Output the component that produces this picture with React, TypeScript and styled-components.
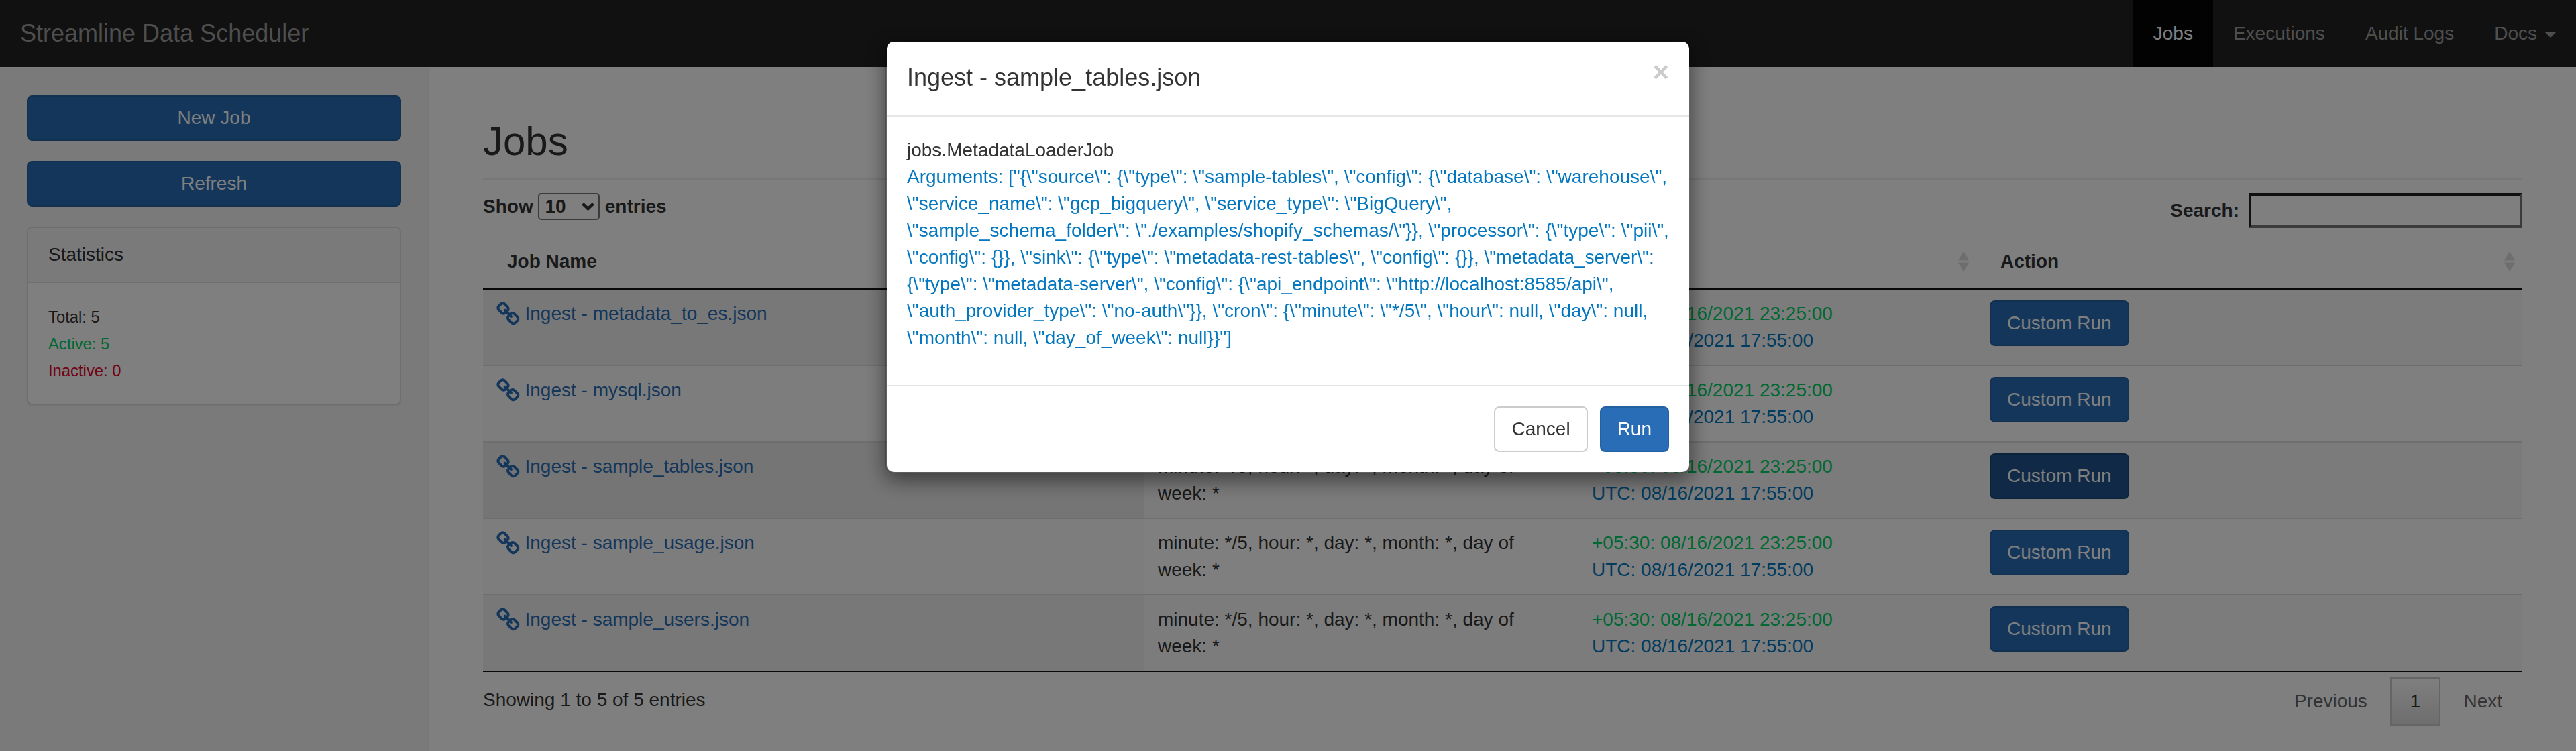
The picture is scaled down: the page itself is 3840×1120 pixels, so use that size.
import React from "react";
import styled, { createGlobalStyle } from "styled-components";

const GlobalStyle = createGlobalStyle`
  *, *::before, *::after { box-sizing: border-box; }
  html, body { margin: 0; padding: 0; }
  body {
    font-family: "Liberation Sans", Arial, sans-serif;
    font-size: 28px;
    line-height: 40px;
    color: #333;
    background: #fff;
    overflow: hidden;
  }
`;

const Page = styled.div`
  display: flex;
  flex-direction: column;
  height: 1120px;
`;

/* ---------- Navbar ---------- */

const Navbar = styled.nav`
  flex: none;
  display: flex;
  justify-content: space-between;
  height: 100px;
  background: #222;
`;

const Brand = styled.a`
  padding: 30px;
  font-size: 36px;
  color: #9d9d9d;
`;

const NavList = styled.ul`
  display: flex;
  margin: 0;
  padding: 0;
  list-style: none;
`;

const NavItem = styled.li<{ $active?: boolean }>`
  display: flex;
  align-items: center;
  padding: 0 30px;
  color: ${(p) => (p.$active ? "#fff" : "#9d9d9d")};
  background: ${(p) => (p.$active ? "#040404" : "transparent")};
`;

const Caret = styled.span`
  margin: 4px 0 0 12px;
  border-top: 8px solid currentColor;
  border-left: 8px solid transparent;
  border-right: 8px solid transparent;
`;

/* ---------- Shared ---------- */

const Button = styled.button<{ $variant?: "primary" | "pressed" | "default"; $block?: boolean }>`
  display: ${(p) => (p.$block ? "block" : "inline-block")};
  width: ${(p) => (p.$block ? "100%" : "auto")};
  height: 68px;
  padding: 0 24px;
  font: inherit;
  line-height: 40px;
  border: 2px solid
    ${(p) => (p.$variant === "default" ? "#ccc" : p.$variant === "pressed" ? "#1a4677" : "#2461a1")};
  border-radius: 8px;
  color: ${(p) => (p.$variant === "default" ? "#333" : "#fff")};
  background: ${(p) =>
    p.$variant === "default" ? "#fff" : p.$variant === "pressed" ? "#1f538c" : "#286db6"};
`;

/* ---------- Sidebar ---------- */

const Columns = styled.div`
  flex: 1;
  display: flex;
`;

const Sidebar = styled.aside`
  flex: none;
  display: flex;
  flex-direction: column;
  gap: 30px;
  width: 640px;
  margin-top: 2px;
  padding: 40px;
  background: #f5f5f5;
  border-right: 2px solid #eee;
`;

const Panel = styled.section`
  border: 2px solid #ddd;
  border-radius: 8px;
  background: #fff;
  box-shadow: 0 2px 2px rgba(0, 0, 0, 0.05);
  overflow: hidden;
`;

const PanelHeading = styled.div`
  padding: 20px 30px;
  background: #f5f5f5;
  border-bottom: 2px solid #ddd;
`;

const PanelBody = styled.div`
  padding: 30px;
`;

const Stat = styled.div<{ $color?: string }>`
  height: 40px;
  color: ${(p) => p.$color ?? "inherit"};
  small {
    font-size: 23.8px;
  }
`;

/* ---------- Main ---------- */

const Main = styled.main`
  flex: 1;
  padding: 78px 80px 0;
`;

const Title = styled.h2`
  margin: 0 0 20px;
  height: 90px;
  font-size: 60px;
  font-weight: 400;
  line-height: 66px;
  border-bottom: 2px solid #eee;
`;

const Toolbar = styled.div`
  display: flex;
  justify-content: space-between;
  align-items: flex-start;
  height: 62px;
  font-weight: 700;
`;

const LengthLabel = styled.label`
  display: flex;
  align-items: center;
  gap: 7.8px;
`;

const SelectBox = styled.span`
  display: inline-flex;
  align-items: center;
  justify-content: space-between;
  width: 91.5px;
  height: 40px;
  padding: 0 6px 0 8px;
  border: 2px solid #767676;
  border-radius: 5px;
`;

const FilterLabel = styled.label`
  display: flex;
  align-items: center;
  gap: 14px;
`;

const SearchInput = styled.input`
  width: 408px;
  height: 52px;
  padding: 0 4px;
  font: inherit;
  background: #fff;
  border: 4px inset #767676;
  border-radius: 0;
`;

const Table = styled.table`
  width: 100%;
  table-layout: fixed;
  border-collapse: separate;
  border-spacing: 0;
  border-bottom: 2px solid #111;
`;

const Th = styled.th<{ $width: number }>`
  width: ${(p) => p.$width}px;
  height: 82px;
  padding: 0;
  text-align: left;
  border-bottom: 2px solid #111;
`;

const ThInner = styled.div`
  display: flex;
  align-items: center;
  justify-content: space-between;
  height: 80px;
  padding: 0 10px 0 36px;
`;

const Row = styled.tr<{ $shade: string }>`
  background: ${(p) => p.$shade};
  &:not(:first-child) td {
    border-top: 2px solid #ddd;
  }
`;

const Td = styled.td<{ $shade?: string }>`
  padding: 16px 20px;
  vertical-align: top;
  background: ${(p) => p.$shade ?? "transparent"};
`;

const ButtonCell = styled.div`
  height: 80px;
`;

const JobLink = styled.a`
  display: flex;
  gap: 7.8px;
  height: 40px;
  color: #286db6;
  svg {
    margin-top: 2px;
  }
`;

const When = styled.div<{ $utc?: boolean }>`
  color: ${(p) => (p.$utc ? "#0277c0" : "#00d066")};
`;

const TableFooter = styled.div`
  display: flex;
  justify-content: space-between;
  padding-top: 8px;
`;

const Info = styled.div`
  padding-top: 14px;
`;

const Pager = styled.div`
  display: flex;
  gap: 4px;
`;

const PageButton = styled.span<{ $current?: boolean }>`
  height: 72px;
  padding: 14px 28px;
  border: 2px solid ${(p) => (p.$current ? "#cacaca" : "transparent")};
  color: ${(p) => (p.$current ? "#333" : "#666")};
  background: ${(p) => (p.$current ? "linear-gradient(#fff, #dcdcdc)" : "none")};
`;

/* ---------- Modal ---------- */

const Backdrop = styled.div`
  position: fixed;
  inset: 0;
  display: flex;
  justify-content: center;
  align-items: flex-start;
  padding-top: 60px;
  background: rgba(0, 0, 0, 0.5);
`;

const Dialog = styled.div`
  width: 1200px;
  background: #fff;
  background-clip: padding-box;
  border: 2px solid rgba(0, 0, 0, 0.2);
  border-radius: 12px;
  box-shadow: 0 10px 30px rgba(0, 0, 0, 0.5);
`;

const DialogHeader = styled.div`
  display: flex;
  justify-content: space-between;
  height: 112px;
  padding: 28px 30px 0;
  border-bottom: 2px solid #e5e5e5;
`;

const DialogTitle = styled.h4`
  margin: 0;
  font-size: 36px;
  font-weight: 400;
  line-height: 51px;
`;

const Close = styled.span`
  margin-top: -3px;
  font-size: 42px;
  font-weight: 700;
  line-height: 42px;
  color: #000;
  opacity: 0.2;
`;

const DialogBody = styled.div`
  padding: 30px 30px 50px;
`;

const Arguments = styled.div`
  color: #0277c0;
`;

const DialogFooter = styled.div`
  display: flex;
  justify-content: flex-end;
  gap: 18px;
  padding: 30px;
  border-top: 2px solid #e5e5e5;
`;

const LinkIcon = () => (
  <svg width="34.67" height="34.67" viewBox="0 0 1664 1664" fill="currentColor">
    <path d="M1456 1216q0-40-28-68l-208-208q-28-28-68-28-42 0-72 32 3 3 19 18.5t21.5 21.5 15 19 13 25.5 3.5 27.5q0 40-28 68t-68 28q-15 0-27.5-3.5t-25.5-13-19-15-21.5-21.5-18.5-19q-33 31-33 73 0 40 28 68l206 207q27 27 68 27 40 0 68-26l147-146q28-28 28-67zm-703-705q0-40-28-68l-206-207q-28-28-68-28-39 0-68 27l-147 146q-28 28-28 67 0 40 28 68l208 208q27 27 68 27 42 0 72-31-3-3-19-18.5t-21.5-21.5-15-19-13-25.5-3.5-27.5q0-40 28-68t68-28q15 0 27.5 3.5t25.5 13 19 15 21.5 21.5 18.5 19q33-31 33-73zm895 705q0 120-85 203l-147 146q-83 83-203 83-121 0-204-85l-206-207q-83-83-83-203 0-123 88-209l-88-88q-86 88-208 88-120 0-204-84l-208-208q-84-84-84-204t85-203l147-146q83-83 203-83 121 0 204 85l206 207q83 83 83 203 0 123-88 209l88 88q86-88 208-88 120 0 204 84l208 208q84 84 84 204z" />
  </svg>
);

const SortIcon = () => (
  <svg width="18" height="30" viewBox="0 0 18 30" fill="#dcdcdc">
    <path d="M9 0l8 13.5H1zM1 16.5h16L9 30z" />
  </svg>
);

const Chevron = () => (
  <svg width="19" height="12" viewBox="0 0 19 12" fill="none" stroke="#333" strokeWidth="4.4">
    <path d="M1.6 1.6l7.9 7.6 7.9-7.6" />
  </svg>
);

const columns = [
  { label: "Job Name", width: 986 },
  { label: "Schedule", width: 647 },
  { label: "Next Run", width: 593 },
  { label: "Action", width: 814 },
];

const jobs = ["metadata_to_es", "mysql", "sample_tables", "sample_usage", "sample_users"];
const hovered = 2;

const shades = (i: number) => {
  if (i === hovered) return { row: "#f6f6f6", sorted: "#eaeaea" };
  return i % 2 === 0 ? { row: "#f9f9f9", sorted: "#f1f1f1" } : { row: "#fff", sorted: "#fafafa" };
};

const jobArguments = String.raw`["{\"source\": {\"type\": \"sample-tables\", \"config\": {\"database\": \"warehouse\", \"service_name\": \"gcp_bigquery\", \"service_type\": \"BigQuery\", \"sample_schema_folder\": \"./examples/shopify_schemas/\"}}, \"processor\": {\"type\": \"pii\", \"config\": {}}, \"sink\": {\"type\": \"metadata-rest-tables\", \"config\": {}}, \"metadata_server\": {\"type\": \"metadata-server\", \"config\": {\"api_endpoint\": \"http://localhost:8585/api\", \"auth_provider_type\": \"no-auth\"}}, \"cron\": {\"minute\": \"*/5\", \"hour\": null, \"day\": null, \"month\": null, \"day_of_week\": null}}"]`;

export default function App() {
  return (
    <>
      <GlobalStyle />
      <Page>
        <Navbar>
          <Brand>Streamline Data Scheduler</Brand>
          <NavList>
            <NavItem $active>Jobs</NavItem>
            <NavItem>Executions</NavItem>
            <NavItem>Audit Logs</NavItem>
            <NavItem>
              Docs
              <Caret />
            </NavItem>
          </NavList>
        </Navbar>
        <Columns>
          <Sidebar>
            <Button $block>New Job</Button>
            <Button $block>Refresh</Button>
            <Panel>
              <PanelHeading>Statistics</PanelHeading>
              <PanelBody>
                <Stat>
                  <small>Total: 5</small>
                </Stat>
                <Stat $color="#00d066">
                  <small>Active: 5</small>
                </Stat>
                <Stat $color="#e00025">
                  <small>Inactive: 0</small>
                </Stat>
              </PanelBody>
            </Panel>
          </Sidebar>
          <Main>
            <Title>Jobs</Title>
            <Toolbar>
              <LengthLabel>
                Show
                <SelectBox>
                  10
                  <Chevron />
                </SelectBox>
                entries
              </LengthLabel>
              <FilterLabel>
                Search:
                <SearchInput type="search" />
              </FilterLabel>
            </Toolbar>
            <Table>
              <thead>
                <tr>
                  {columns.map((c) => (
                    <Th key={c.label} $width={c.width}>
                      <ThInner>
                        {c.label}
                        <SortIcon />
                      </ThInner>
                    </Th>
                  ))}
                </tr>
              </thead>
              <tbody>
                {jobs.map((job, i) => (
                  <Row key={job} $shade={shades(i).row}>
                    <Td $shade={shades(i).sorted}>
                      <JobLink>
                        <LinkIcon />
                        Ingest - {job}.json
                      </JobLink>
                    </Td>
                    <Td>minute: */5, hour: *, day: *, month: *, day of week: *</Td>
                    <Td>
                      <When>+05:30: 08/16/2021 23:25:00</When>
                      <When $utc>UTC: 08/16/2021 17:55:00</When>
                    </Td>
                    <Td>
                      <ButtonCell>
                        <Button $variant={i === hovered ? "pressed" : "primary"}>Custom Run</Button>
                      </ButtonCell>
                    </Td>
                  </Row>
                ))}
              </tbody>
            </Table>
            <TableFooter>
              <Info>Showing 1 to 5 of 5 entries</Info>
              <Pager>
                <PageButton>Previous</PageButton>
                <PageButton $current>1</PageButton>
                <PageButton>Next</PageButton>
              </Pager>
            </TableFooter>
          </Main>
        </Columns>
      </Page>
      <Backdrop>
        <Dialog role="dialog">
          <DialogHeader>
            <DialogTitle>Ingest - sample_tables.json</DialogTitle>
            <Close>×</Close>
          </DialogHeader>
          <DialogBody>
            <div>jobs.MetadataLoaderJob</div>
            <Arguments>Arguments: {jobArguments}</Arguments>
          </DialogBody>
          <DialogFooter>
            <Button $variant="default">Cancel</Button>
            <Button>Run</Button>
          </DialogFooter>
        </Dialog>
      </Backdrop>
    </>
  );
}
